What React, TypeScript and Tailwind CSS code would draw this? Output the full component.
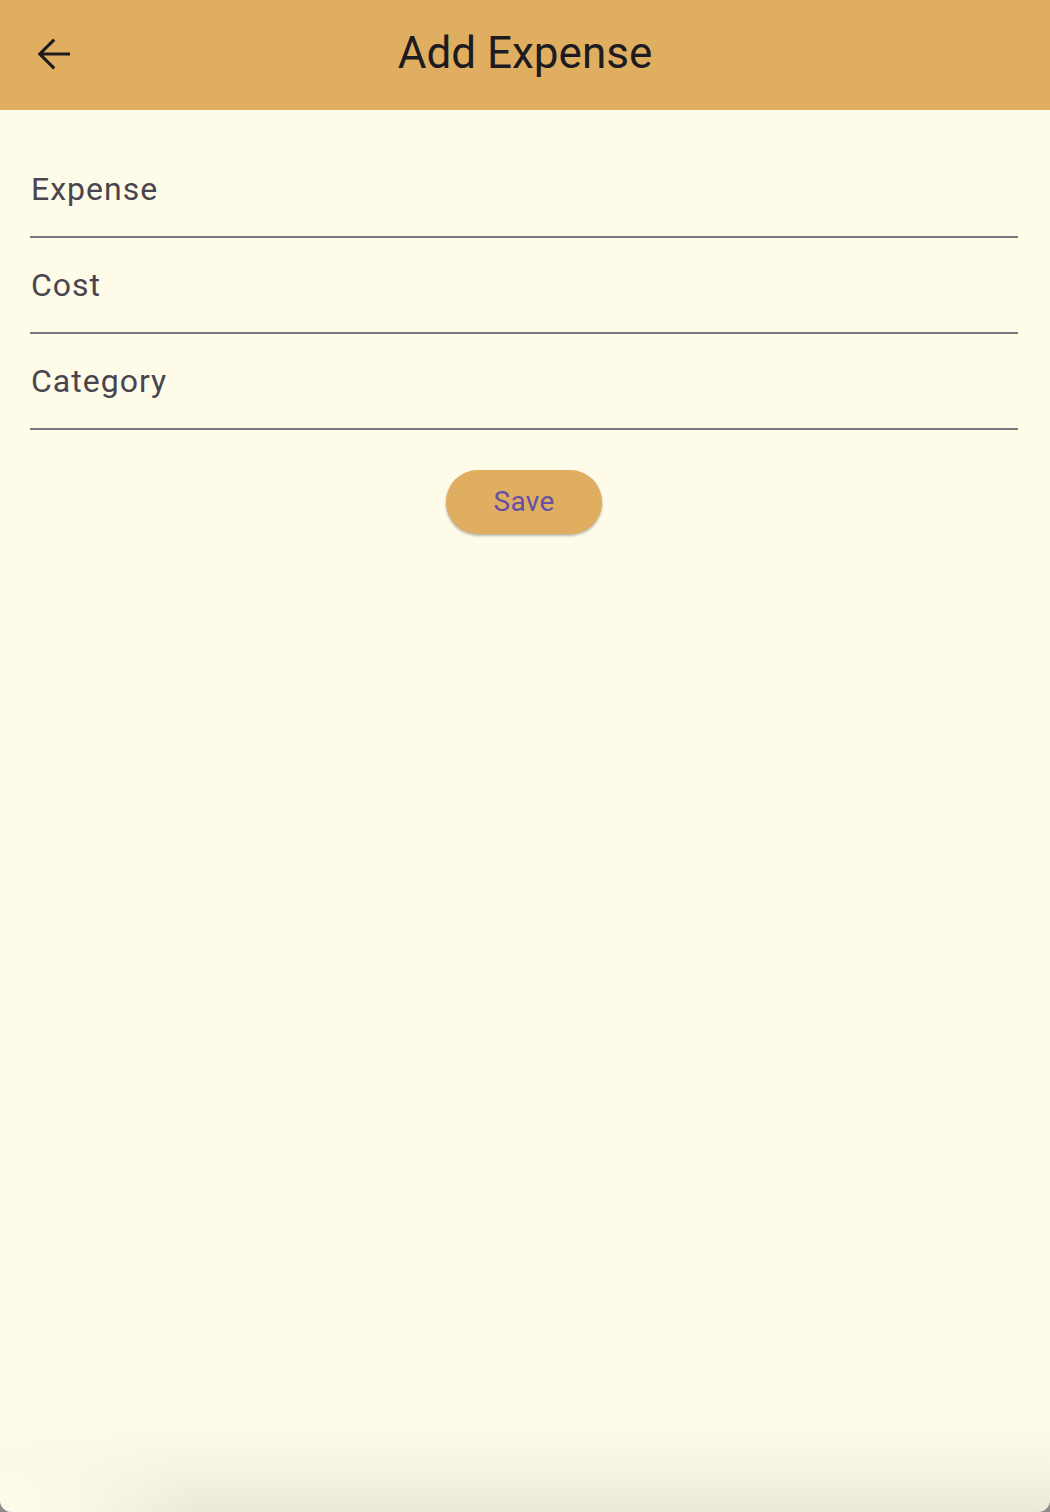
import React from "react";

function BackArrow() {
  return (
    <svg width="48" height="48" viewBox="0 0 24 24" fill="none" aria-hidden="true">
      <path
        d="M20 12H4.9M12.1 4.8L4.9 12L12.1 19.2"
        stroke="#1d1b20"
        strokeWidth="1.55"
        strokeLinejoin="miter"
      />
    </svg>
  );
}

function Field({ label }: { label: string }) {
  return (
    <div className="h-[96px] border-b-2 border-[#7b777e] pt-[31px] pl-[1px]">
      <span className="block text-[32px] leading-[32px] tracking-[1px] text-[#49454f]">
        {label}
      </span>
    </div>
  );
}

export default function App() {
  return (
    <div
      className="w-[1050px] h-[1512px] bg-[#8c8c8a]"
      style={{ fontFamily: "Roboto, 'Noto Sans', sans-serif" }}
    >
      <div className="relative flex h-full flex-col overflow-hidden rounded-b-[12px] bg-[#fffbe9]">
        <header className="grid h-[110px] grid-cols-[1fr_auto_1fr] items-center bg-[#e0ae61]">
          <div className="flex items-center pl-[30px] pb-[2px]">
            <BackArrow />
          </div>
          <h1 className="pb-[4px] text-[44px] leading-[44px] font-normal text-[#1d1b20]">
            Add Expense
          </h1>
          <div />
        </header>

        <main className="flex flex-col pt-[32px] pl-[30px] pr-[32px]">
          <Field label="Expense" />
          <Field label="Cost" />
          <Field label="Category" />
          <div className="mt-[40px] flex justify-center">
            <button className="flex h-[64px] w-[156px] items-center justify-center rounded-full bg-[#e0ae61] text-[28px] leading-[28px] font-normal tracking-[0.3px] text-[#6750a4] shadow-[0_2px_3px_rgba(0,0,0,0.22),0_1px_2px_rgba(0,0,0,0.12)]">
              Save
            </button>
          </div>
        </main>

        <div className="pointer-events-none absolute inset-x-0 bottom-0 h-[90px] bg-[linear-gradient(to_bottom,rgba(0,0,0,0)_0%,rgba(40,40,20,0.03)_45%,rgba(40,40,20,0.085)_100%)]" />
        <div className="pointer-events-none absolute bottom-0 left-0 h-[110px] w-[200px] bg-[radial-gradient(ellipse_at_bottom_left,#fffbe9_0%,rgba(255,251,233,0.8)_25%,rgba(255,251,233,0)_70%)]" />
      </div>
    </div>
  );
}
